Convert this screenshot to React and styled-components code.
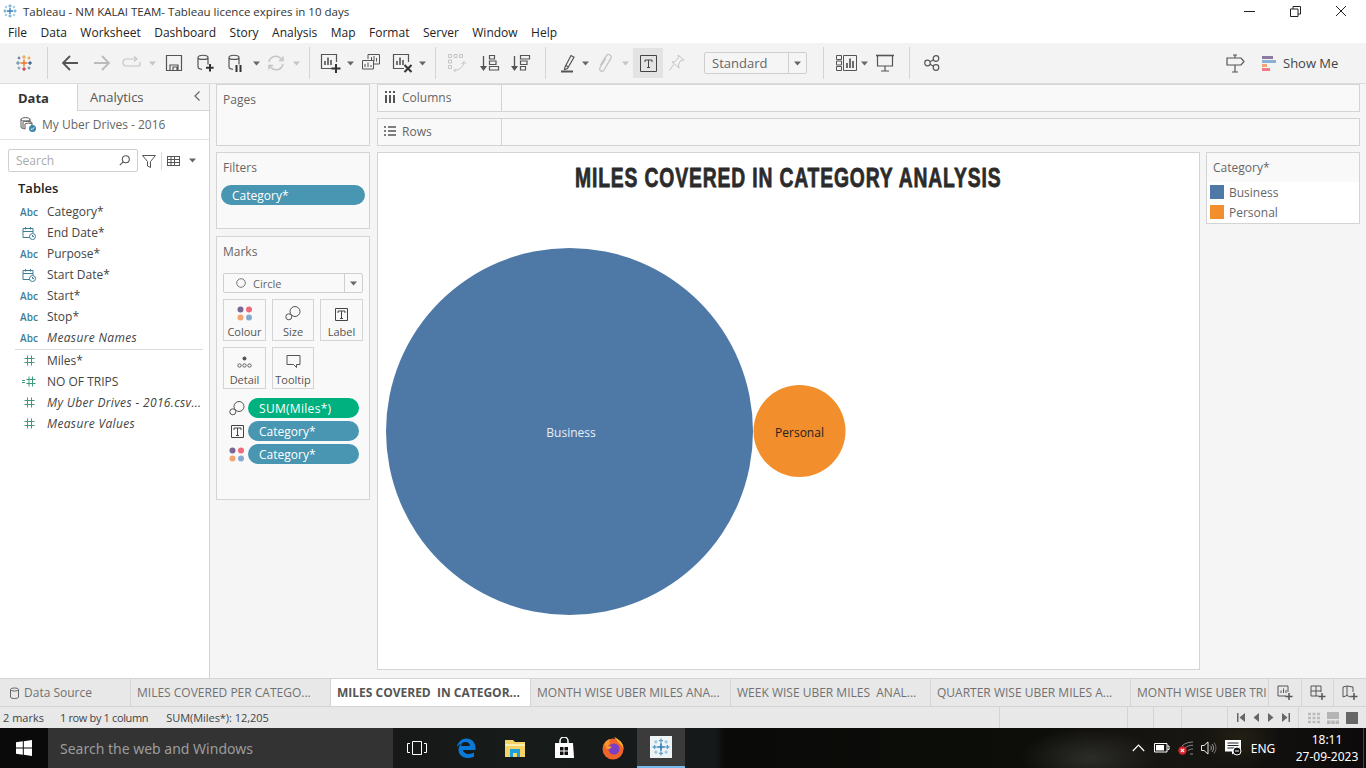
import React from "react";
import styled, { createGlobalStyle } from "styled-components";

const Global = createGlobalStyle`
  html, body {
    margin: 0;
    padding: 0;
    background: #f5f5f5;
    overflow: hidden;
  }
  * {
    box-sizing: border-box;
  }
`;

const UI_FONT = `"Open Sans", "Noto Sans", "Liberation Sans", sans-serif`;

/* ---------- icons ---------- */

const Ico = styled.svg`
  display: block;
  flex-shrink: 0;
  fill: none;
  stroke: ${(p) => p.$c || "#555"};
  stroke-width: ${(p) => p.$sw || 1.2};
`;

const Icon = ({ s = 20, h, c, sw, children }) => (
  <Ico
    width={s}
    height={h || s}
    viewBox={`0 0 ${s} ${h || s}`}
    $c={c}
    $sw={sw}
  >
    {children}
  </Ico>
);

const Cross = ({ x, y, r, c, sw = 1 }) => (
  <path
    d={`M${x - r} ${y}H${x + r}M${x} ${y - r}V${y + r}`}
    stroke={c}
    strokeWidth={sw}
  />
);

const LogoColor = () => (
  <Icon s={18}>
    <Cross x={9} y={9} r={3.5} c="#e8762b" sw={1.4} />
    <Cross x={9} y={3} r={2} c="#e8a03b" />
    <Cross x={9} y={15} r={2} c="#c72035" />
    <Cross x={3} y={9} r={2} c="#59879b" />
    <Cross x={15} y={9} r={2} c="#1f447e" />
    <Cross x={4} y={4} r={1.5} c="#5b6591" />
    <Cross x={14} y={4} r={1.5} c="#eb912b" />
    <Cross x={4} y={14} r={1.5} c="#7099a6" />
    <Cross x={14} y={14} r={1.5} c="#5b879b" />
  </Icon>
);

const LogoBlue = ({ s = 14 }) => (
  <Icon s={s}>
    <g transform={`scale(${s / 14})`}>
      <Cross x={7} y={7} r={3} c="#2f7fb5" sw={1.3} />
      <Cross x={7} y={2} r={1.6} c="#5a9fca" />
      <Cross x={7} y={12} r={1.6} c="#5a9fca" />
      <Cross x={2} y={7} r={1.6} c="#5a9fca" />
      <Cross x={12} y={7} r={1.6} c="#5a9fca" />
      <Cross x={3} y={3} r={1.2} c="#8fbfdc" />
      <Cross x={11} y={3} r={1.2} c="#8fbfdc" />
      <Cross x={3} y={11} r={1.2} c="#8fbfdc" />
      <Cross x={11} y={11} r={1.2} c="#8fbfdc" />
    </g>
  </Icon>
);

const Caret = ({ c = "#666" }) => (
  <Icon s={7} h={5} c="none">
    <path d="M0 .5h7L3.500 4.500z" fill={c} />
  </Icon>
);

const Back = ({ c = "#555" }) => (
  <Icon s={18} c={c} sw={1.8}>
    <path d="M17 9H2M9 2 2 9l7 7" />
  </Icon>
);
const Forward = ({ c = "#bbb" }) => (
  <Icon s={18} c={c} sw={1.8}>
    <path d="M1 9h15M9 2l7 7-7 7" />
  </Icon>
);
const Redo = () => (
  <Icon s={20} c="#c4c4c4">
    <path d="M14 6H4.500a3 3 0 0 0 0 7H16a2 2 0 0 0 2-2V9" />
    <path d="M12 3.500 15 6l-3 2.500" />
  </Icon>
);
const Save = () => (
  <Icon s={18}>
    <path d="M1.500 1.500h15v15h-15z" />
    <path d="M5 16V11h8v5M8 16v-3h4v3" />
  </Icon>
);
const Cyl = ({ children }) => (
  <Icon s={20}>
    <path d="M3 4.500c0-3 10-3 10 0v7M3 4.500c0 2.600 10 2.600 10 0M3 4.500V14c0 1.400 1.600 2 4 2.300" />
    {children}
  </Icon>
);
const NewSource = () => (
  <Cyl>
    <path d="M15 11v7.500M11 14.800h7.600" stroke="#333" strokeWidth="2" />
  </Cyl>
);
const Pause = () => (
  <Cyl>
    <path d="M10.500 12v7M14.500 12v7" stroke="#333" strokeWidth="2" />
  </Cyl>
);
const Refresh = () => (
  <Icon s={18} c="#c4c4c4" sw={1.5}>
    <path d="M2 8a7 7 0 0 1 12-3.500l2 2M16 10a7 7 0 0 1-12 3.500l-2-2" />
    <path d="M16 2.500v4h-4M2 15.500v-4h4" />
  </Icon>
);
const ChartBox = ({ children }) => (
  <Icon s={22}>
    <path d="M12 16.500H1.500v-14h15V10" />
    <path d="M5 13V9M8 13V5.500M11 13V8" strokeWidth="1.600" />
    {children}
  </Icon>
);
const NewSheet = () => (
  <ChartBox>
    <path d="M16 12v9M11.500 16.500h9" stroke="#333" strokeWidth="2" />
  </ChartBox>
);
const Duplicate = () => (
  <Icon s={20} sw={1}>
    <path d="M7 6V1.500h11.500V11H13" />
    <path d="M10.500 8.500V4M13 8.500V3M15.500 8.500V5" />
    <path d="M1.500 7.500H12.500V16H1.500z" fill="#f3f3f3" />
    <path d="M4 14v-3M7 14v-4.500M10 14v-2" />
  </Icon>
);
const ClearSheet = () => (
  <ChartBox>
    <path d="M12.500 13l7 7M19.500 13l-7 7" stroke="#333" strokeWidth="2" />
  </ChartBox>
);
const Swap = () => (
  <Icon s={20} c="#c4c4c4" sw={1}>
    <path d="M1.500 1.500h3v3h-3zM7 1.500h3v3H7zM12.500 1.500h3v3h-3zM1.500 7h3v3h-3zM1.500 12.500h3v3h-3z" />
    <path d="M7 17.500c5 0 9-3 10-8.500M14.500 11 17 8.500l2 2.500M9 15.500l-2 2 2 2" />
  </Icon>
);
const SortAsc = () => (
  <Icon s={20}>
    <path d="M3.500 3v12" strokeWidth="1.300" />
    <path d="M0 13h7l-3.500 5z" fill="#555" stroke="none" />
    <path d="M9.500 2.500h5v3.500h-5zM9.500 8h6.500v3.500H9.500zM9.500 13.500h9V17h-9z" />
  </Icon>
);
const SortDesc = () => (
  <Icon s={20}>
    <path d="M3.500 3v12" strokeWidth="1.300" />
    <path d="M0 13h7l-3.500 5z" fill="#555" stroke="none" />
    <path d="M9.500 2.500h9V6h-9zM9.500 8h6.500v3.500H9.500zM9.500 13.500h5V17h-5z" />
  </Icon>
);
const Pen = () => (
  <Icon s={16} h={20}>
    <path d="M5 14 11 2.500l3 1.700L7.500 15.500 4.500 16.500z" />
    <path d="M6 12.500l2.500 1.500" />
    <path d="M1 18.500h12" stroke="#555" strokeWidth="2" />
  </Icon>
);
const Clip = () => (
  <Icon s={16} h={20} c="#c4c4c4" sw={1.3}>
    <path d="M3.500 12 9.500 2.500a2.600 2.600 0 0 1 4.300 2.900L7 17a2.300 2.300 0 0 1-4-2.300L8.800 5.500" />
  </Icon>
);
const TBox = ({ s = 17, c = "#444" }) => (
  <Icon s={s} c={c} sw={1}>
    <path d={`M.5 .5H${s - 0.5}V${s - 0.5}H.5z`} />
    <path
      d={`M${s / 2 - 3.5} ${s / 2 - 1.5}V${s / 2 - 3.5}H${s / 2 + 3.5}V${s / 2 - 1.5}M${s / 2} ${s / 2 - 3.5}V${s / 2 + 4}M${s / 2 - 1.5} ${s / 2 + 4}H${s / 2 + 1.5}`}
    />
  </Icon>
);
const Pin = () => (
  <Icon s={18} c="#c4c4c4" sw={1}>
    <path d="M10 1l6 5-3.500.6-2 4.400.6 3-7-6 3-.6 3.400-3.900z" />
    <path d="M5.500 10.500 1.500 16.500" />
  </Icon>
);
const Cards = () => (
  <Icon s={21} h={18} sw={1}>
    <path d="M.5 1.500h5v4h-5zM.5 7h5v4h-5zM.5 12.500h5v4h-5zM7.500 1.500h13v15h-13z" />
    <path d="M11 14V9M14 14V4.500M17 14V7" strokeWidth="1.700" />
  </Icon>
);
const Present = () => (
  <Icon s={18}>
    <path d="M0 1.500h18" strokeWidth="1.600" />
    <path d="M1.500 2v10h15V2M9 12v4.500M5 17h8" />
  </Icon>
);
const Share = () => (
  <Icon s={16}>
    <circle cx="3.500" cy="8" r="2.800" />
    <circle cx="12" cy="3.500" r="2.800" />
    <circle cx="12" cy="12.500" r="2.800" />
    <path d="M6 6.700 9.500 4.800M6 9.300l3.500 1.900" />
  </Icon>
);
const SignPost = () => (
  <Icon s={19} h={19}>
    <path d="M1 4h14l3 3.500L15 11H1zM9 1v3M9 11v7M6 18h6M7 1h4" />
  </Icon>
);
const ShowMeIcon = () => (
  <Icon s={15} h={17} c="none">
    <rect x="0" y="1" width="11" height="3" fill="#8d7aa3" stroke="none" />
    <rect x="0" y="5" width="14" height="3" fill="#8bb0d6" stroke="none" />
    <rect x="0" y="9" width="5" height="3" fill="#f2a571" stroke="none" />
    <rect x="0" y="13" width="8" height="3" fill="#f27985" stroke="none" />
  </Icon>
);
const Chevron = () => (
  <Icon s={8} h={12} c="#666">
    <path d="M6.500 1.500 2 6l4.500 4.500" />
  </Icon>
);
const ColumnsIcon = () => (
  <Icon s={12} c="#555" sw={2}>
    <path d="M2 4v8M6 4v8M10 4v8M2 0v2M6 0v2M10 0v2" />
  </Icon>
);
const RowsIcon = () => (
  <Icon s={12} c="#555" sw={1.5}>
    <path d="M4 2h8M4 6h8M4 10h8M0 2h2M0 6h2M0 10h2" />
  </Icon>
);
const SourceIcon = () => (
  <Icon s={17}>
    <path d="M1 3.500c0-2.500 9-2.500 9 0v3M1 3.500c0 2 9 2 9 0M1 3.500V11c0 1 1.500 1.700 4 1.900M3 6c0-1 9-1 9 1v3M5 8c0-1 7-1 7 0M3 6v6M5 8v5" strokeWidth="1" />
    <circle cx="12.500" cy="12.500" r="3.500" fill="#3e87ac" stroke="none" />
    <path d="M10.800 12.500l1.200 1.200 2.200-2.300" stroke="#fff" strokeWidth="1" />
  </Icon>
);
const Magnifier = () => (
  <Icon s={11} c="#555" sw={1.1}>
    <circle cx="6.800" cy="4.200" r="3.500" />
    <path d="M4.200 6.800.8 10.200" />
  </Icon>
);
const Funnel = () => (
  <Icon s={14} c="#555" sw={1}>
    <path d="M.5 1.500h13L8.500 7.500v6l-3-1.500V7.500z" />
  </Icon>
);
const ListView = () => (
  <Icon s={17} h={10} c="#555" sw={1}>
    <path d="M0 .5h13M0 3.500h13M0 6.500h13M0 9.500h13M.5 0v10M4 0v10M7.500 0v10M12.500 0v10" />
  </Icon>
);
const CalendarClock = () => (
  <Icon s={14} c="#3e7d96" sw={1}>
    <path d="M8 11.500H1V2.500h10V7M1 5.500h10M3.500 1v2.500M8.500 1v2.500" />
    <circle cx="10.500" cy="10.500" r="3" fill="#fff" />
    <path d="M10.500 9v1.600h1.500" />
  </Icon>
);
const Hash = ({ calc }) => (
  <Icon s={calc ? 15 : 11} h={11} c="#3f9a78" sw={1}>
    {calc ? (
      <path d="M0 4.500h3M0 6.500h3M7 .5v10M10.500 .5v10M4.500 3.500h9M4.500 7.500h9" />
    ) : (
      <path d="M3.500 .5v10M7.500 .5v10M.5 3.500h10M.5 7.500h10" />
    )}
  </Icon>
);
const Dots = () => (
  <Icon s={16} h={15} c="none">
    <circle cx="3.500" cy="3.500" r="3" fill="#7b6794" />
    <circle cx="12" cy="3.500" r="3" fill="#ef6a7a" />
    <circle cx="3.500" cy="11.500" r="3" fill="#f2a571" />
    <circle cx="12" cy="11.500" r="3" fill="#88a9d0" />
  </Icon>
);
const SizeIcon = () => (
  <Icon s={16} c="#555" sw={1}>
    <circle cx="10" cy="6.500" r="5" />
    <circle cx="3.800" cy="11.800" r="3" fill="#f9f9f9" />
  </Icon>
);
const DetailIcon = () => (
  <Icon s={15} h={13} c="#555" sw={0.9}>
    <circle cx="7.500" cy="2.500" r="2" fill="#555" stroke="none" />
    <circle cx="2.500" cy="9.500" r="1.700" />
    <circle cx="7.500" cy="9.500" r="1.700" />
    <circle cx="12.500" cy="9.500" r="1.700" />
  </Icon>
);
const TooltipIcon = () => (
  <Icon s={15} c="#555" sw={1}>
    <path d="M1 1.500h13v9h-3.500v3l-3-3H1z" />
  </Icon>
);
const Db = () => (
  <Icon s={9} h={12} c="#666" sw={1}>
    <path d="M.5 2.500c0-2 8-2 8 0V10c0 2-8 2-8 0zM.5 2.500c0 2 8 2 8 0" />
  </Icon>
);
const AddSheet = () => (
  <Icon s={16}>
    <path d="M9 11H1V1h10v6" strokeWidth="1" />
    <path d="M4 8V5.500M6.500 8V3.500M9 8V5" strokeWidth="1" />
    <path d="M12 8v7M8.500 11.500h7" stroke="#555" strokeWidth="1.500" />
  </Icon>
);
const AddDash = () => (
  <Icon s={16}>
    <path d="M8.500 11H1V1h10v6M1 6h10M6 1v10" strokeWidth="1" />
    <path d="M12 8v7M8.500 11.500h7" stroke="#555" strokeWidth="1.500" />
  </Icon>
);
const AddStory = () => (
  <Icon s={16}>
    <path d="M8.500 12 5 10.500 1 12V2l4-1 6 1v5M5 1v9.500" strokeWidth="1" />
    <path d="M12 8v7M8.500 11.500h7" stroke="#555" strokeWidth="1.500" />
  </Icon>
);
const Nav = ({ d }) => (
  <Icon s={8} h={9} c="none">
    <path d={d} fill="#666" />
  </Icon>
);
const GridView = () => (
  <Icon s={12} c="#bbb" sw={2.5}>
    <path d="M0 2h12M0 6h12M0 10h12" strokeDasharray="3 1.500" />
  </Icon>
);
const MedView = () => (
  <Icon s={12} c="none">
    <path d="M0 0h12v7H0zM0 8.500h3.500V12H0zM4.200 8.500h3.500V12H4.200zM8.500 8.500H12V12H8.500z" fill="#b5b5b5" />
  </Icon>
);
const FullView = () => (
  <Icon s={12} c="none">
    <path d="M0 0h12v12H0z" fill="#666" />
  </Icon>
);

/* taskbar */
const WinLogo = () => (
  <Icon s={16} c="none">
    <path d="M0 2.300 6.800 1.300V7.500H0zM7.800 1.200 16 0v7.500H7.800zM0 8.500h6.800v6.200L0 13.700zM7.800 8.500H16V16L7.800 14.800z" fill="#fff" />
  </Icon>
);
const TaskView = () => (
  <Icon s={20} h={14} c="#fff" sw={1}>
    <path d="M5.500 .5h9v13h-9zM3 2.500H.5v9H3M17 2.500h2.500v9H17" />
  </Icon>
);
const Edge = () => (
  <Icon s={20} c="none">
    <path
      d="M1 9C2 3.500 6 .5 10.500 .5c5 0 9 3.500 9 10v1.500H7c.3 3.500 5.500 5.500 11 2.500v4.300c-7 3-15.500 .5-15.500-7 0-3 1.600-5.500 4.500-7-1 1-1.700 2-2 3.300h9c0-4.500-6.500-6.500-13 .9z"
      fill="#0a78d7"
    />
  </Icon>
);
const Folder = () => (
  <Icon s={22} h={20} c="none">
    <path d="M1 2h8l2 2h10v15H1z" fill="#f6d365" />
    <path d="M1 6h20v2H1z" fill="#fbeeb5" />
    <path d="M6 11h10v8h-3v-4H9v4H6z" fill="#1d9fdc" />
  </Icon>
);
const Store = () => (
  <Icon s={22} c="none">
    <path d="M2 6h18l1 15H2z" fill="#fff" />
    <path d="M7 6V4a3 3 0 0 1 8 0v2" stroke="#fff" strokeWidth="1.500" />
    <path d="M7 10h3.500v3.500H7zM11.500 10H15v3.500h-3.500zM7 14.500h3.500V18H7zM11.500 14.500H15V18h-3.500z" fill="#111" />
  </Icon>
);
const Firefox = () => (
  <Icon s={24} c="none">
    <circle cx="12" cy="13" r="10.500" fill="#f0642c" />
    <path d="M13 1c5 2 10 6 9.500 13-.5-4-3-6-5-7-1-2.500-3-4-4.500-6z" fill="#fcb32c" />
    <path d="M3 9c1-3 3-5 6-6-1 2-1 3 0 4l-3 4z" fill="#f8992a" />
    <circle cx="13" cy="13" r="5.500" fill="#7a3fc4" />
    <path d="M4 11c3-1 5-1 7 0-1 .5-2 1-2 2-2 0-3 0-5-2z" fill="#f8a02c" />
  </Icon>
);
const TrayChevron = () => (
  <Icon s={13} h={8} c="#fff" sw={1.2}>
    <path d="M.8 7 6.500 1.200 12.200 7" />
  </Icon>
);
const Battery = () => (
  <Icon s={16} h={10} c="#fff" sw={1}>
    <path d="M.5 .5h12.500v8.500H.5zM13.500 3H15v3.500h-1.500" />
    <path d="M2 2h8v5.500H2z" fill="#fff" stroke="none" />
  </Icon>
);
const Wifi = () => (
  <Icon s={16} h={14} c="#8a8a8a" sw={1}>
    <path d="M4 5c3-3 7-4 11-4M7 7c2.500-2 5-2.800 8-2.800M10 9.500c1.500-1 3-1.500 5-1.500M12 13h3" />
    <circle cx="4.500" cy="9.500" r="4.200" fill="#d8232a" stroke="none" />
    <path d="M2.800 7.800l3.400 3.400M6.200 7.800l-3.400 3.400" stroke="#fff" strokeWidth="1.100" />
  </Icon>
);
const Volume = () => (
  <Icon s={16} h={14} c="#fff" sw={0.9}>
    <path d="M.5 4.500H3L7 1v12L3 9.500H.5z" />
    <path d="M9 4.500a3 3 0 0 1 0 5M11 3a6 6 0 0 1 0 8" stroke="#aaa" />
    <path d="M13 1.500a8.500 8.500 0 0 1 0 11" stroke="#777" />
  </Icon>
);
const Notify = () => (
  <Icon s={18} h={16} c="none">
    <path d="M0 0h16v11.500H11l-4 3v-3H0z" fill="#fff" />
    <path d="M2.500 3h11M2.500 5.500h11M2.500 8h7" stroke="#222" strokeWidth="1" />
    <circle cx="12" cy="11" r="4" fill="#111" stroke="#fff" strokeWidth="1" />
    <path d="M10 11h4" stroke="#fff" strokeWidth="1" />
  </Icon>
);

/* ---------- chrome ---------- */

const Page = styled.div`
  width: 1366px;
  height: 768px;
  display: flex;
  flex-direction: column;
  overflow: hidden;
  background: #f5f5f5;
  font-family: ${UI_FONT};
  font-size: 12px;
  color: #555;
`;

const TitleBar = styled.div`
  height: 22px;
  flex-shrink: 0;
  display: flex;
  align-items: center;
  padding-left: 3px;
  gap: 6px;
  background: #fff;
  color: #333;
  font-size: 11.5px;
`;

const WindowControls = styled.div`
  margin-left: auto;
  display: flex;
  align-items: center;
  margin-right: 2px;
`;

const WinBtn = styled.div`
  width: 46px;
  height: 22px;
  display: flex;
  align-items: center;
  justify-content: center;
`;

const MenuBar = styled.div`
  height: 21px;
  flex-shrink: 0;
  display: flex;
  align-items: center;
  padding-left: 8px;
  gap: 13.5px;
  background: #fff;
  color: #222;
  font-size: 12px;
`;

const Toolbar = styled.div`
  height: 41px;
  flex-shrink: 0;
  display: flex;
  align-items: center;
  background: #f3f3f3;
  border-bottom: 1px solid #dcdcdc;
`;

const Tool = styled.div`
  width: ${(p) => p.$w}px;
  margin-left: ${(p) => p.$ml || 0}px;
  height: 30px;
  flex-shrink: 0;
  display: flex;
  align-items: center;
  justify-content: center;
  background: ${(p) => (p.$on ? "#e3e3e3" : "transparent")};
`;

const PushedTool = styled(Tool)`
  margin-left: auto;
`;

const ToolSep = styled.div`
  width: 1px;
  height: 32px;
  flex-shrink: 0;
  margin-left: ${(p) => p.$ml || 0}px;
  background: #d4d4d4;
`;

const Combo = styled.div`
  width: ${(p) => p.$w}px;
  margin-left: ${(p) => p.$ml || 0}px;
  margin-top: ${(p) => p.$mt || 0}px;
  height: ${(p) => p.$h}px;
  flex-shrink: 0;
  display: flex;
  align-items: center;
  background: ${(p) => p.$bg || "#f5f5f5"};
  border: 1px solid #cfcfcf;
  border-radius: 2px;
  color: #666;
`;

const ComboLabel = styled.div`
  flex: 1;
  display: flex;
  align-items: center;
  gap: 7px;
  padding-left: ${(p) => p.$pl}px;
  font-size: ${(p) => p.$fs}px;
`;

const ComboArrow = styled.div`
  width: ${(p) => p.$w}px;
  height: 100%;
  display: flex;
  align-items: center;
  justify-content: center;
  border-left: 1px solid #cfcfcf;
`;

const ShowMe = styled.div`
  margin-left: 12px;
  margin-right: 29px;
  width: 75px;
  flex-shrink: 0;
  display: flex;
  align-items: center;
  gap: 6px;
  color: #444;
  font-size: 13px;
  white-space: nowrap;
`;

/* ---------- body ---------- */

const Body = styled.div`
  height: 594px;
  flex-shrink: 0;
  display: flex;
`;

const DataPane = styled.aside`
  width: 210px;
  flex-shrink: 0;
  display: flex;
  flex-direction: column;
  background: #fff;
  border-right: 1px solid #d4d4d4;
`;

const PaneTabs = styled.div`
  height: 27px;
  flex-shrink: 0;
  display: flex;
`;

const PaneTab = styled.div`
  width: ${(p) => p.$w}px;
  display: flex;
  align-items: center;
  padding-left: ${(p) => p.$pl}px;
  font-size: 13px;
  font-weight: ${(p) => (p.$active ? 700 : 400)};
  color: ${(p) => (p.$active ? "#333" : "#555")};
  background: ${(p) => (p.$active ? "#fff" : "#f5f5f5")};
  border-left: ${(p) => (p.$active ? "none" : "1px solid #d4d4d4")};
  border-bottom: ${(p) => (p.$active ? "none" : "1px solid #d4d4d4")};
`;

const PaneCollapse = styled.div`
  flex: 1;
  display: flex;
  align-items: center;
  justify-content: center;
  padding-bottom: 2px;
  background: #f5f5f5;
  border-bottom: 1px solid #d4d4d4;
`;

const SourceRow = styled.div`
  height: 29px;
  flex-shrink: 0;
  display: flex;
  align-items: center;
  gap: 5px;
  padding: 0 0 2px 20px;
  border-bottom: 1px solid #e2e2e2;
  color: #666;
  font-size: 12px;
`;

const SearchRow = styled.div`
  display: flex;
  align-items: center;
  margin: 9px 0 0 8px;
`;

const SearchBox = styled.div`
  width: 130px;
  height: 23px;
  display: flex;
  align-items: center;
  justify-content: space-between;
  padding: 0 7px;
  border: 1px solid #cfcfcf;
  border-radius: 2px;
  color: #aaa;
  font-size: 12px;
`;

const SearchTools = styled.div`
  display: flex;
  align-items: center;
  margin-left: 4px;
  gap: 5px;
`;

const SearchDivider = styled.div`
  width: 1px;
  height: 18px;
  background: #d8d8d8;
`;

const TablesHead = styled.div`
  margin: 7px 0 4px 18px;
  height: 18px;
  line-height: 18px;
  font-size: 13px;
  font-weight: 600;
  color: #222;
`;

const Field = styled.div`
  height: 21px;
  display: flex;
  align-items: center;
  font-size: 12px;
  font-style: ${(p) => (p.$italic ? "italic" : "normal")};
  letter-spacing: ${(p) => (p.$italic ? "0.35px" : "0")};
  color: #444;
  white-space: nowrap;
`;

const FieldType = styled.div`
  width: 47px;
  flex-shrink: 0;
  display: flex;
  align-items: center;
  justify-content: center;
  padding-left: 11px;
  font-size: 10px;
  font-style: normal;
  font-weight: 600;
  letter-spacing: 0;
  color: #3e7d96;
`;

const FieldRule = styled.div`
  height: 1px;
  margin: 1px 6px 0 15px;
  background: #dcdcdc;
`;

const Workspace = styled.div`
  flex: 1;
  display: grid;
  grid-template-columns: 154px 983px;
  column-gap: 7px;
  padding-left: 6px;
`;

const Stack = styled.div`
  display: flex;
  flex-direction: column;
`;

const Card = styled.section`
  height: ${(p) => p.$h}px;
  margin-top: ${(p) => p.$mt || 0}px;
  padding-top: 7px;
  flex-shrink: 0;
  background: #f9f9f9;
  border: 1px solid #d4d4d4;
`;

const CardTitle = styled.div`
  height: 16px;
  line-height: 16px;
  padding-left: 6px;
  color: #666;
  font-size: 12px;
`;

const Pill = styled.div`
  height: 20px;
  border-radius: 10px;
  margin: ${(p) => p.$m || 0};
  padding-left: ${(p) => p.$pl || 11}px;
  display: flex;
  align-items: center;
  flex: ${(p) => (p.$grow ? 1 : "none")};
  background: ${(p) => (p.$green ? "#00b180" : "#4996b2")};
  color: #fff;
  font-size: 12px;
  letter-spacing: ${(p) => (p.$green ? "0.3px" : "0")};
`;

const MarkGrid = styled.div`
  display: grid;
  grid-template-columns: 43px 42px 43px;
  grid-auto-rows: 42px;
  gap: 6px;
  margin: 6px 0 0 6px;
`;

const MarkBtn = styled.div`
  display: flex;
  flex-direction: column;
  align-items: center;
  justify-content: flex-end;
  gap: 3px;
  padding-bottom: 1px;
  border: 1px solid #d4d4d4;
  font-size: 11px;
  line-height: 15px;
  color: #555;
`;

const MarkPills = styled.div`
  display: flex;
  flex-direction: column;
  gap: 3px;
  margin: 9px 10px 0 12px;
`;

const MarkRow = styled.div`
  display: flex;
  align-items: center;
  gap: 3px;
`;

const MarkRowIcon = styled.div`
  width: 16px;
  display: flex;
  justify-content: center;
`;

const Shelf = styled.div`
  height: 28px;
  margin-top: ${(p) => p.$mt || 0}px;
  flex-shrink: 0;
  display: flex;
  background: #f9f9f9;
  border: 1px solid #d4d4d4;
`;

const ShelfLabel = styled.div`
  width: 124px;
  display: flex;
  align-items: center;
  gap: 6px;
  padding: 0 0 2px 6px;
  border-right: 1px solid #d4d4d4;
  color: #666;
  font-size: 12px;
`;

const VizRow = styled.div`
  margin-top: 6px;
  height: 518px;
  display: flex;
  gap: 6px;
`;

const Viz = styled.section`
  width: 823px;
  flex-shrink: 0;
  background: #fff;
  border: 1px solid #d4d4d4;
  display: flex;
  flex-direction: column;
  align-items: center;
`;

const VizTitle = styled.h1`
  margin: 10px 0 0;
  height: 30px;
  line-height: 30px;
  white-space: nowrap;
  font-family: "Liberation Sans", sans-serif;
  font-size: 27px;
  font-weight: 700;
  letter-spacing: 1.2px;
  color: #2b2b2b;
  -webkit-text-stroke: 0.8px #2b2b2b;
  transform: scaleX(0.715);
`;

const Chart = styled.svg`
  display: block;
  width: 821px;
  height: 476px;
`;

const Legend = styled.section`
  width: 154px;
  height: 72px;
  flex-shrink: 0;
  background: #fff;
  border: 1px solid #d4d4d4;
`;

const LegendHead = styled.div`
  height: 29px;
  display: flex;
  align-items: center;
  padding-left: 6px;
  background: #f9f9f9;
  color: #666;
  font-size: 12px;
`;

const LegendRow = styled.div`
  height: 20px;
  display: flex;
  align-items: center;
  gap: 5px;
  padding-left: 3px;
  color: #666;
  font-size: 12px;
`;

const Swatch = styled.span`
  width: 14px;
  height: 14px;
  background: ${(p) => p.$c};
`;

/* ---------- tabs, status, taskbar ---------- */

const TabBar = styled.div`
  height: 29px;
  flex-shrink: 0;
  display: flex;
  background: #e8e8e8;
  border-top: 1px solid #d4d4d4;
  border-bottom: 1px solid #d4d4d4;
`;

const SheetTab = styled.div`
  width: ${(p) => p.$w}px;
  flex-shrink: 0;
  display: flex;
  align-items: center;
  gap: 5px;
  padding-left: ${(p) => p.$pl || 6}px;
  overflow: hidden;
  white-space: pre;
  color: ${(p) => (p.$active ? "#555" : "#717171")};
  font-size: 12px;
  font-weight: ${(p) => (p.$active ? 700 : 400)};
  background: ${(p) => (p.$active ? "#fff" : "transparent")};
  border-right: 1px solid #d4d4d4;
`;

const TabAction = styled.div`
  width: 32px;
  flex-shrink: 0;
  display: flex;
  align-items: center;
  justify-content: center;
  border-left: ${(p) => (p.$first ? "none" : "1px solid #d4d4d4")};
`;

const StatusBar = styled.div`
  height: 21px;
  flex-shrink: 0;
  display: flex;
  background: #e8e8e8;
  color: #444;
  font-size: 11px;
`;

const StatusCell = styled.div`
  width: ${(p) => p.$w}px;
  flex-shrink: 0;
  display: flex;
  align-items: center;
  justify-content: ${(p) => (p.$spread ? "space-around" : "flex-start")};
  padding: ${(p) => (p.$spread ? "0 5px" : 0)};
  border-left: ${(p) => (p.$plain ? "none" : "1px solid #d4d4d4")};
`;

const StatusText = styled.span`
  margin-left: ${(p) => p.$ml}px;
  letter-spacing: ${(p) => p.$ls || 0}px;
  white-space: nowrap;
`;

const Taskbar = styled.div`
  height: 40px;
  flex-shrink: 0;
  display: flex;
  align-items: center;
  color: #fff;
  background:
    radial-gradient(ellipse 70px 30px at 1090px 30px, #2c2c28 0%, transparent 100%),
    radial-gradient(ellipse 40px 30px at 1240px 10px, #221f14 0%, transparent 100%),
    linear-gradient(90deg, #10100e 0, #171b19 520px, #15191a 715px, #0a0b08 725px, #0d0d0a 1040px, #181612 1180px, #0c0a0a 1366px);
`;

const StartBtn = styled.div`
  width: 48px;
  height: 100%;
  display: flex;
  align-items: center;
  justify-content: center;
  background: #0a0a0a;
`;

const TaskSearch = styled.div`
  width: 345px;
  height: 100%;
  display: flex;
  align-items: center;
  padding-left: 12px;
  background: #333;
  color: #9c9c9c;
  font-family: "Noto Sans", "Open Sans", sans-serif;
  font-size: 14px;
`;

const TaskApp = styled.div`
  width: ${(p) => p.$w}px;
  height: 100%;
  flex-shrink: 0;
  display: flex;
  align-items: center;
  justify-content: center;
  background: ${(p) => (p.$active ? "#3b3b3b" : "transparent")};
  border-bottom: ${(p) => (p.$active ? "2px solid #76b9ed" : "none")};
`;

const AppTile = styled.div`
  width: 22px;
  height: 22px;
  display: flex;
  align-items: center;
  justify-content: center;
  background: #eef3f6;
`;

const Tray = styled.div`
  margin-left: auto;
  height: 100%;
  display: flex;
  align-items: center;
`;

const TraySlot = styled.div`
  width: ${(p) => p.$w}px;
  flex-shrink: 0;
  display: flex;
  justify-content: center;
  align-items: center;
`;

const Lang = styled.div`
  width: 30px;
  text-align: center;
  font-family: "Noto Sans", "Open Sans", sans-serif;
  font-size: 12px;
`;

const Clock = styled.div`
  width: 72px;
  margin-left: 13px;
  text-align: center;
  font-family: "Noto Sans", "Open Sans", sans-serif;
  font-size: 12px;
  line-height: 17px;
`;

const ShowDesktop = styled.div`
  width: 3px;
  height: 100%;
  border-left: 1px solid #444;
`;

/* ---------- data ---------- */

const MENUS = ["File", "Data", "Worksheet", "Dashboard", "Story", "Analysis", "Map", "Format", "Server", "Window", "Help"];

const FIELDS = [
  { name: "Category*", type: "abc" },
  { name: "End Date*", type: "date" },
  { name: "Purpose*", type: "abc" },
  { name: "Start Date*", type: "date" },
  { name: "Start*", type: "abc" },
  { name: "Stop*", type: "abc" },
  { name: "Measure Names", type: "abc", italic: true },
  { rule: true },
  { name: "Miles*", type: "num" },
  { name: "NO OF TRIPS", type: "calc" },
  { name: "My Uber Drives - 2016.csv...", type: "num", italic: true },
  { name: "Measure Values", type: "num", italic: true },
];

const SHEETS = [
  "MILES COVERED PER CATEGO...",
  "MILES COVERED  IN CATEGOR...",
  "MONTH WISE UBER MILES ANA...",
  "WEEK WISE UBER MILES  ANAL...",
  "QUARTER WISE UBER MILES A...",
];

const TOOLS = [
  { w: 47, icon: <LogoColor /> },
  { sep: true },
  { w: 30, ml: 7, icon: <Back /> },
  { w: 34, icon: <Forward /> },
  { w: 26, icon: <Redo /> },
  { w: 14, icon: <Caret c="#c4c4c4" /> },
  { w: 30, icon: <Save /> },
  { w: 32, icon: <NewSource /> },
  { w: 30, icon: <Pause /> },
  { w: 10, icon: <Caret /> },
  { w: 30, icon: <Refresh /> },
  { w: 10, icon: <Caret c="#c4c4c4" /> },
  { sep: true, ml: 8 },
  { w: 30, ml: 6, icon: <NewSheet /> },
  { w: 8, icon: <Caret /> },
  { w: 34, icon: <Duplicate /> },
  { w: 30, icon: <ClearSheet /> },
  { w: 8, icon: <Caret /> },
  { sep: true, ml: 9 },
  { w: 30, ml: 6, icon: <Swap /> },
  { w: 36, icon: <SortAsc /> },
  { w: 26, icon: <SortDesc /> },
  { sep: true, ml: 11 },
  { w: 28, ml: 8, icon: <Pen /> },
  { w: 6, icon: <Caret /> },
  { w: 34, icon: <Clip /> },
  { w: 6, icon: <Caret c="#c4c4c4" /> },
  { w: 30, ml: 5, on: true, icon: <TBox /> },
  { w: 28, icon: <Pin /> },
];

const TOOLS_END = [
  { sep: true, ml: 16 },
  { w: 30, ml: 7, icon: <Cards /> },
  { w: 6, icon: <Caret /> },
  { w: 36, icon: <Present /> },
  { sep: true, ml: 6 },
  { w: 30, ml: 7, icon: <Share /> },
];

const renderTool = (t, i) =>
  t.sep ? (
    <ToolSep key={i} $ml={t.ml} />
  ) : (
    <Tool key={i} $w={t.w} $ml={t.ml} $on={t.on}>
      {t.icon}
    </Tool>
  );

const fieldIcon = (type) => {
  if (type === "abc") return "Abc";
  if (type === "date") return <CalendarClock />;
  if (type === "calc") return <Hash calc />;
  return <Hash />;
};

/* ---------- page ---------- */

const App = () => {
  return (
    <Page>
      <Global />
      <TitleBar>
        <LogoBlue />
        <span>Tableau - NM KALAI TEAM- Tableau licence expires in 10 days</span>
        <WindowControls>
          <WinBtn>
            <Icon s={11} h={3} c="#222" sw={1}>
              <path d="M0 1.500h11" />
            </Icon>
          </WinBtn>
          <WinBtn>
            <Icon s={11} c="#222" sw={1}>
              <path d="M.5 3h7.500v7.500H.5zM3 3V.5h7.500V8H8" />
            </Icon>
          </WinBtn>
          <WinBtn>
            <Icon s={12} c="#222" sw={1}>
              <path d="M1 1l10 10M11 1 1 11" />
            </Icon>
          </WinBtn>
        </WindowControls>
      </TitleBar>

      <MenuBar>
        {MENUS.map((m) => (
          <span key={m}>{m}</span>
        ))}
      </MenuBar>

      <Toolbar>
        {TOOLS.map(renderTool)}
        <Combo $w={103} $h={22} $ml={13}>
          <ComboLabel $pl={7} $fs={13}>Standard</ComboLabel>
          <ComboArrow $w={18}>
            <Caret />
          </ComboArrow>
        </Combo>
        {TOOLS_END.map(renderTool)}
        <PushedTool $w={30}>
          <SignPost />
        </PushedTool>
        <ShowMe>
          <ShowMeIcon />
          <span>Show Me</span>
        </ShowMe>
      </Toolbar>

      <Body>
        <DataPane>
          <PaneTabs>
            <PaneTab $w={77} $pl={18} $active>Data</PaneTab>
            <PaneTab $w={107} $pl={12}>Analytics</PaneTab>
            <PaneCollapse>
              <Chevron />
            </PaneCollapse>
          </PaneTabs>
          <SourceRow>
            <SourceIcon />
            <span>My Uber Drives - 2016</span>
          </SourceRow>
          <SearchRow>
            <SearchBox>
              <span>Search</span>
              <Magnifier />
            </SearchBox>
            <SearchTools>
              <Funnel />
              <SearchDivider />
              <ListView />
              <Caret />
            </SearchTools>
          </SearchRow>
          <TablesHead>Tables</TablesHead>
          {FIELDS.map((f, i) =>
            f.rule ? (
              <FieldRule key={i} />
            ) : (
              <Field key={f.name} $italic={f.italic}>
                <FieldType>{fieldIcon(f.type)}</FieldType>
                <span>{f.name}</span>
              </Field>
            )
          )}
        </DataPane>

        <Workspace>
          <Stack>
            <Card $h={62}>
              <CardTitle>Pages</CardTitle>
            </Card>
            <Card $h={77} $mt={6}>
              <CardTitle>Filters</CardTitle>
              <Pill $m="9px 4px 0">Category*</Pill>
            </Card>
            <Card $h={264} $mt={7}>
              <CardTitle>Marks</CardTitle>
              <Combo $w={140} $h={20} $ml={6} $mt={13} $bg="#f9f9f9">
                <ComboLabel $pl={12} $fs={11}>
                  <Icon s={10} c="#777" sw={1}>
                    <circle cx="5" cy="5" r="4.300" />
                  </Icon>
                  <span>Circle</span>
                </ComboLabel>
                <ComboArrow $w={18}>
                  <Caret />
                </ComboArrow>
              </Combo>
              <MarkGrid>
                <MarkBtn>
                  <Dots />
                  <span>Colour</span>
                </MarkBtn>
                <MarkBtn>
                  <SizeIcon />
                  <span>Size</span>
                </MarkBtn>
                <MarkBtn>
                  <TBox s={13} />
                  <span>Label</span>
                </MarkBtn>
                <MarkBtn>
                  <DetailIcon />
                  <span>Detail</span>
                </MarkBtn>
                <MarkBtn>
                  <TooltipIcon />
                  <span>Tooltip</span>
                </MarkBtn>
              </MarkGrid>
              <MarkPills>
                <MarkRow>
                  <MarkRowIcon>
                    <SizeIcon />
                  </MarkRowIcon>
                  <Pill $grow $green>SUM(Miles*)</Pill>
                </MarkRow>
                <MarkRow>
                  <MarkRowIcon>
                    <TBox s={13} />
                  </MarkRowIcon>
                  <Pill $grow>Category*</Pill>
                </MarkRow>
                <MarkRow>
                  <MarkRowIcon>
                    <Dots />
                  </MarkRowIcon>
                  <Pill $grow>Category*</Pill>
                </MarkRow>
              </MarkPills>
            </Card>
          </Stack>

          <Stack>
            <Shelf>
              <ShelfLabel>
                <ColumnsIcon />
                <span>Columns</span>
              </ShelfLabel>
            </Shelf>
            <Shelf $mt={6}>
              <ShelfLabel>
                <RowsIcon />
                <span>Rows</span>
              </ShelfLabel>
            </Shelf>
            <VizRow>
              <Viz>
                <VizTitle>MILES COVERED IN CATEGORY ANALYSIS</VizTitle>
                <Chart viewBox="0 0 821 476">
                  <circle cx="191.500" cy="238.500" r="183.500" fill="#4e79a7" />
                  <circle cx="421.500" cy="238" r="46" fill="#f28e2b" />
                  <text x="193" y="243.500" textAnchor="middle" fontSize="12" fill="#e8eef5" fontFamily={UI_FONT}>
                    Business
                  </text>
                  <text x="421.500" y="243.500" textAnchor="middle" fontSize="12" fill="#222" fontFamily={UI_FONT}>
                    Personal
                  </text>
                </Chart>
              </Viz>
              <Legend>
                <LegendHead>Category*</LegendHead>
                <LegendRow>
                  <Swatch $c="#4e79a7" />
                  <span>Business</span>
                </LegendRow>
                <LegendRow>
                  <Swatch $c="#f28e2b" />
                  <span>Personal</span>
                </LegendRow>
              </Legend>
            </VizRow>
          </Stack>
        </Workspace>
      </Body>

      <TabBar>
        <SheetTab $w={131} $pl={10}>
          <Db />
          <span>Data Source</span>
        </SheetTab>
        {SHEETS.map((s, i) => (
          <SheetTab key={s} $w={200} $active={i === 1}>
            {s}
          </SheetTab>
        ))}
        <SheetTab $w={138}>MONTH WISE UBER TRI</SheetTab>
        <TabAction $first>
          <AddSheet />
        </TabAction>
        <TabAction>
          <AddDash />
        </TabAction>
        <TabAction>
          <AddStory />
        </TabAction>
      </TabBar>

      <StatusBar>
        <StatusCell $w={999} $plain>
          <StatusText $ml={3}>2 marks</StatusText>
          <StatusText $ml={16} $ls={-0.35}>1 row by 1 column</StatusText>
          <StatusText $ml={18} $ls={-0.05}>SUM(Miles*): 12,205</StatusText>
        </StatusCell>
        <StatusCell $w={128} />
        <StatusCell $w={26} />
        <StatusCell $w={28} />
        <StatusCell $w={46} />
        <StatusCell $w={71} $spread>
          <Nav d="M0 0h1.500v9H0zM8 0v9L2.500 4.500z" />
          <Nav d="M7 0v9L1.500 4.500z" />
          <Nav d="M1 0v9l5.500-4.500z" />
          <Nav d="M8 0v9H6.500V0zM0 0v9l5.500-4.500z" />
        </StatusCell>
        <StatusCell $w={68} $spread>
          <GridView />
          <MedView />
          <FullView />
        </StatusCell>
      </StatusBar>

      <Taskbar>
        <StartBtn>
          <WinLogo />
        </StartBtn>
        <TaskSearch>Search the web and Windows</TaskSearch>
        <TaskApp $w={48}>
          <TaskView />
        </TaskApp>
        <TaskApp $w={50}>
          <Edge />
        </TaskApp>
        <TaskApp $w={48}>
          <Folder />
        </TaskApp>
        <TaskApp $w={49}>
          <Store />
        </TaskApp>
        <TaskApp $w={49}>
          <Firefox />
        </TaskApp>
        <TaskApp $w={48} $active>
          <AppTile>
            <LogoBlue s={18} />
          </AppTile>
        </TaskApp>
        <Tray>
          <TraySlot $w={24}>
            <TrayChevron />
          </TraySlot>
          <TraySlot $w={24}>
            <Battery />
          </TraySlot>
          <TraySlot $w={24}>
            <Wifi />
          </TraySlot>
          <TraySlot $w={22}>
            <Volume />
          </TraySlot>
          <TraySlot $w={28}>
            <Notify />
          </TraySlot>
          <Lang>ENG</Lang>
          <Clock>
            <div>18:11</div>
            <div>27-09-2023</div>
          </Clock>
          <ShowDesktop />
        </Tray>
      </Taskbar>
    </Page>
  );
};

export default App;
